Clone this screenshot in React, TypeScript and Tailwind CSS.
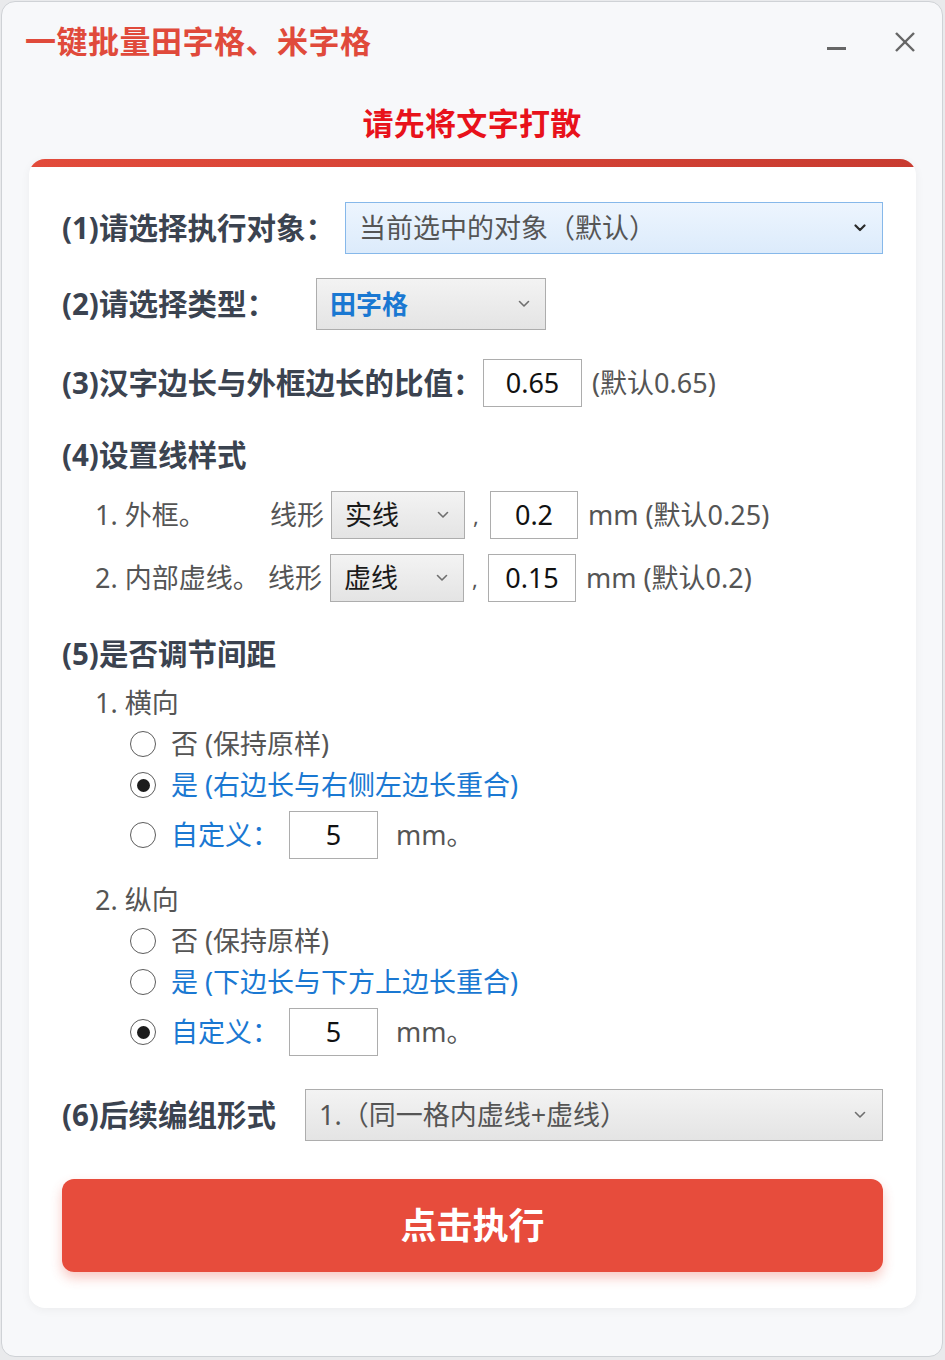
import React from "react";

const FONT = '"Noto Sans", "Noto Sans CJK SC", sans-serif';

function Chevron({ dark = false }: { dark?: boolean }) {
  return (
    <svg width="12" height="8" viewBox="0 0 12 8" className="shrink-0">
      <polyline
        points="1.5,1.5 6,6 10.5,1.5"
        fill="none"
        stroke={dark ? "#2b2b2b" : "#6f6f6f"}
        strokeWidth={dark ? 2.2 : 1.6}
        strokeLinecap="round"
        strokeLinejoin="round"
      />
    </svg>
  );
}

function GraySelect({
  width,
  children,
}: {
  width: string;
  children: React.ReactNode;
}) {
  return (
    <div
      className={`${width} h-full flex items-center justify-between pl-[13px] pr-[15px] border border-[#adadad] bg-gradient-to-b from-[#f3f3f3] to-[#e4e4e4]`}
    >
      {children}
      <Chevron />
    </div>
  );
}

function Radio({ checked = false }: { checked?: boolean }) {
  return (
    <span className="w-[26px] h-[26px] rounded-full border-[1.5px] border-[#5c5c5c] bg-white flex items-center justify-center shrink-0">
      {checked && <span className="w-[13px] h-[13px] rounded-full bg-[#1c1c1c]" />}
    </span>
  );
}

function Input({ value, width }: { value: string; width: string }) {
  return (
    <div
      className={`${width} h-full border border-[#adadad] bg-white flex items-center justify-center text-[27px] text-[#111]`}
    >
      {value}
    </div>
  );
}

export default function App() {
  return (
    <div
      className="w-[945px] h-[1360px] bg-[#e9eaec] pt-[1px] pl-[1px]"
      style={{ fontFamily: FONT }}
    >
      <div className="w-[942px] h-[1356px] rounded-[14px] border border-[#cfd2d6] bg-[#f7f8fa] flex flex-col overflow-hidden">
        {/* header */}
        <div className="h-[78px] flex items-center justify-between pl-[23px] pr-[26px]">
          <div className="text-[31px] font-bold text-[#e04a3b] leading-none tracking-[0.5px]">
            一键批量田字格、米字格
          </div>
          <div className="flex items-center gap-[48px] pt-[2px]">
            <div className="w-[19px] h-[3px] bg-[#666] mt-[12px]" />
            <svg width="22" height="22" viewBox="0 0 22 22">
              <line x1="2" y1="2" x2="20" y2="20" stroke="#666" strokeWidth="2.4" />
              <line x1="20" y1="2" x2="2" y2="20" stroke="#666" strokeWidth="2.4" />
            </svg>
          </div>
        </div>
        <div className="mt-[23px] h-[40px] flex items-center justify-center text-[31px] font-bold text-[#e8121b] leading-none tracking-[0.3px]">
          请先将文字打散
        </div>

        {/* card */}
        <div className="mt-[16px] ml-[27px] w-[887px] rounded-[16px] overflow-hidden bg-white shadow-[0_2px_10px_rgba(0,0,0,0.05)]">
          <div className="h-[8px] bg-gradient-to-r from-[#e24b3b] to-[#c83b30]" />
          <div className="px-[33px] pt-[35px] pb-[36px] flex flex-col text-[27px] text-[#555]">
            {/* (1) */}
            <div className="h-[52px] flex items-center">
              <div className="w-[283px] text-[29.5px] font-bold text-[#3b4350]">(1)请选择执行对象：</div>
              <div className="flex-1 h-full flex items-center justify-between pl-[13px] pr-[16px] border border-[#86b8ea] bg-gradient-to-b from-[#edf5fe] to-[#dcebfb] text-[#555]">
                当前选中的对象（默认）
                <Chevron dark />
              </div>
            </div>

            {/* (2) */}
            <div className="mt-[24px] h-[52px] flex items-center">
              <div className="w-[254px] text-[29.5px] font-bold text-[#3b4350]">(2)请选择类型：</div>
              <GraySelect width="w-[230px]">
                <span className="font-bold text-[#1a78d2] text-[26px]">田字格</span>
              </GraySelect>
            </div>

            {/* (3) */}
            <div className="mt-[29px] h-[48px] flex items-center">
              <div className="w-[421px] text-[29.5px] font-bold text-[#3b4350] whitespace-nowrap">(3)汉字边长与外框边长的比值：</div>
              <Input value="0.65" width="w-[99px]" />
              <div className="ml-[10px]">(默认0.65)</div>
            </div>

            {/* (4) */}
            <div className="mt-[28px] h-[40px] flex items-center text-[29.5px] font-bold text-[#3b4350]">
              (4)设置线样式
            </div>
            <div className="mt-[16px] h-[48px] flex items-center pl-[33px]">
              <div className="w-[175px]">1. 外框。</div>
              <div className="w-[61px]">线形</div>
              <GraySelect width="w-[134px]">
                <span className="text-[#1a1a1a]">实线</span>
              </GraySelect>
              <div className="w-[25px] pl-[8px] text-[22px]">,</div>
              <Input value="0.2" width="w-[88px]" />
              <div className="ml-[10px]">mm (默认0.25)</div>
            </div>
            <div className="mt-[15px] h-[48px] flex items-center pl-[33px]">
              <div className="w-[173px]">2. 内部虚线。</div>
              <div className="w-[62px]">线形</div>
              <GraySelect width="w-[134px]">
                <span className="text-[#1a1a1a]">虚线</span>
              </GraySelect>
              <div className="w-[24px] pl-[8px] text-[22px]">,</div>
              <Input value="0.15" width="w-[88px]" />
              <div className="ml-[10px]">mm (默认0.2)</div>
            </div>

            {/* (5) */}
            <div className="mt-[32px] h-[40px] flex items-center text-[29.5px] font-bold text-[#3b4350]">
              (5)是否调节间距
            </div>
            <div className="mt-[9px] h-[40px] flex items-center pl-[33px]">1. 横向</div>
            <div className="mt-[1px] h-[40px] flex items-center pl-[68px] gap-[15px]">
              <Radio />
              <span>否 (保持原样)</span>
            </div>
            <div className="mt-[1px] h-[40px] flex items-center pl-[68px] gap-[15px]">
              <Radio checked />
              <span className="text-[#1a78d2]">是 (右边长与右侧左边长重合)</span>
            </div>
            <div className="mt-[6px] h-[48px] flex items-center pl-[68px]">
              <Radio />
              <span className="ml-[15px] w-[118px] text-[#1a78d2]">自定义：</span>
              <Input value="5" width="w-[89px]" />
              <span className="ml-[18px]">mm。</span>
            </div>

            <div className="mt-[21px] h-[40px] flex items-center pl-[33px]">2. 纵向</div>
            <div className="mt-[1px] h-[40px] flex items-center pl-[68px] gap-[15px]">
              <Radio />
              <span>否 (保持原样)</span>
            </div>
            <div className="mt-[1px] h-[40px] flex items-center pl-[68px] gap-[15px]">
              <Radio />
              <span className="text-[#1a78d2]">是 (下边长与下方上边长重合)</span>
            </div>
            <div className="mt-[6px] h-[48px] flex items-center pl-[68px]">
              <Radio checked />
              <span className="ml-[15px] w-[118px] text-[#1a78d2]">自定义：</span>
              <Input value="5" width="w-[89px]" />
              <span className="ml-[18px]">mm。</span>
            </div>

            {/* (6) */}
            <div className="mt-[33px] h-[52px] flex items-center">
              <div className="w-[243px] text-[29.5px] font-bold text-[#3b4350] whitespace-nowrap">(6)后续编组形式</div>
              <div className="flex-1 h-full flex items-center justify-between pl-[13px] pr-[16px] border border-[#adadad] bg-gradient-to-b from-[#f3f3f3] to-[#e4e4e4]">
                <span>1.（同一格内虚线+虚线）</span>
                <Chevron />
              </div>
            </div>

            {/* button */}
            <div className="mt-[38px] h-[93px] rounded-[12px] bg-[#e74c3c] shadow-[0_6px_12px_rgba(231,76,60,0.3)] flex items-center justify-center text-[36px] font-bold text-white">
              点击执行
            </div>
          </div>
        </div>
      </div>
    </div>
  );
}
